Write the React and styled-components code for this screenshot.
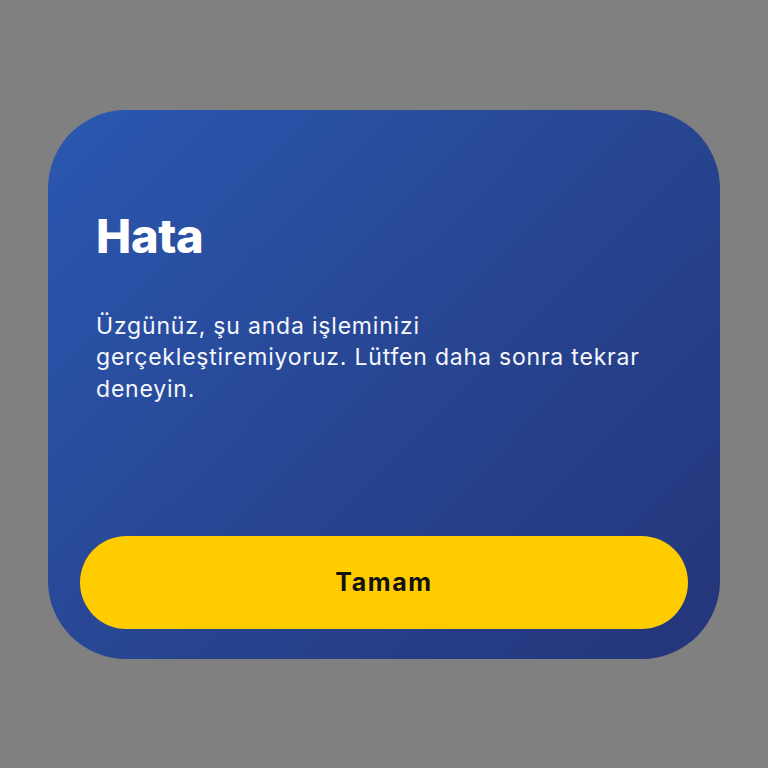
import styled, { createGlobalStyle } from 'styled-components';

const GlobalStyle = createGlobalStyle`
  html, body {
    margin: 0;
    padding: 0;
    background: #808080;
  }
  body {
    font-family: Inter, "Open Sans", "DejaVu Sans", sans-serif;
  }
`;

const Screen = styled.div`
  width: 768px;
  height: 768px;
  display: flex;
  align-items: center;
  justify-content: center;
  background: #808080;
`;

const Dialog = styled.div`
  width: 672px;
  height: 549px;
  box-sizing: border-box;
  border-radius: 78px;
  background: linear-gradient(135deg, #2b58b1 0%, #27448f 55%, #24357a 100%);
  display: flex;
  flex-direction: column;
  padding: 0 32px 30px;
`;

const Content = styled.div`
  flex: 1;
  padding: 98px 16px 0;
  color: #ffffff;
`;

const Title = styled.h2`
  margin: 0;
  font-size: 47px;
  line-height: 56px;
  font-weight: 800;
  letter-spacing: -0.3px;
`;

const Message = styled.p`
  margin: 47px 0 0;
  font-size: 23px;
  line-height: 31.5px;
  font-weight: 400;
  letter-spacing: 0.8px;
  color: #f5f7fc;
`;

const Button = styled.button`
  height: 93px;
  width: 100%;
  border: none;
  border-radius: 47px;
  background: #ffcc00;
  color: #111111;
  font-family: inherit;
  font-size: 25px;
  font-weight: 700;
  letter-spacing: 1.6px;
  cursor: pointer;
`;

export default function App() {
  return (
    <>
      <GlobalStyle />
      <Screen>
        <Dialog>
          <Content>
            <Title>Hata</Title>
            <Message>
              Üzgünüz, şu anda işleminizi gerçekleştiremiyoruz. Lütfen daha sonra tekrar deneyin.
            </Message>
          </Content>
          <Button>Tamam</Button>
        </Dialog>
      </Screen>
    </>
  );
}
